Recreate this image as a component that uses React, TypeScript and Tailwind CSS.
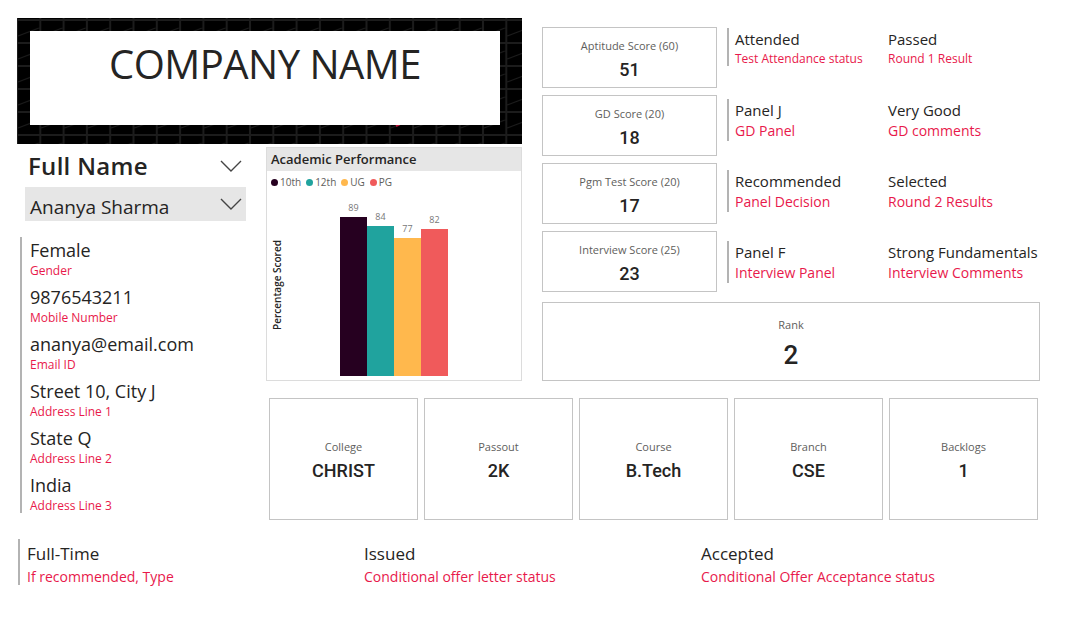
import React from "react";

const RED = "text-[#e8194b]";

type ScoreRow = {
  label: string;
  value: string;
  a: string;
  aSub: string;
  b: string;
  bSub: string;
  offset: string;
  small?: boolean;
};

const scoreRows: ScoreRow[] = [
  { label: "Aptitude Score (60)", value: "51", a: "Attended", aSub: "Test Attendance status", b: "Passed", bSub: "Round 1 Result", offset: "mt-[1px]", small: true },
  { label: "GD Score (20)", value: "18", a: "Panel J", aSub: "GD Panel", b: "Very Good", bSub: "GD comments", offset: "mt-[4px]" },
  { label: "Pgm Test Score (20)", value: "17", a: "Recommended", aSub: "Panel Decision", b: "Selected", bSub: "Round 2 Results", offset: "mt-[7px]" },
  { label: "Interview Score (25)", value: "23", a: "Panel F", aSub: "Interview Panel", b: "Strong Fundamentals", bSub: "Interview Comments", offset: "mt-[10px]" },
];

const personal = [
  { value: "Female", label: "Gender" },
  { value: "9876543211", label: "Mobile Number" },
  { value: "ananya@email.com", label: "Email ID" },
  { value: "Street 10, City J", label: "Address Line 1" },
  { value: "State Q", label: "Address Line 2" },
  { value: "India", label: "Address Line 3" },
];

const bars = [
  { name: "10th", value: 89, color: "bg-[#260020]" },
  { name: "12th", value: 84, color: "bg-[#20a39e]" },
  { name: "UG", value: 77, color: "bg-[#ffb84d]" },
  { name: "PG", value: 82, color: "bg-[#f05a5b]" },
];

const academics = [
  { label: "College", value: "CHRIST" },
  { label: "Passout", value: "2K" },
  { label: "Course", value: "B.Tech" },
  { label: "Branch", value: "CSE" },
  { label: "Backlogs", value: "1" },
];

const offer = [
  { value: "Full-Time", label: "If recommended, Type" },
  { value: "Issued", label: "Conditional offer letter status" },
  { value: "Accepted", label: "Conditional Offer Acceptance status" },
];

function Chevron() {
  return (
    <svg width="22" height="12" viewBox="0 0 22 12" fill="none">
      <polyline points="1,1 11,11 21,1" stroke="#444" strokeWidth="1.4" />
    </svg>
  );
}

function Banner() {
  return (
    <div className="relative h-full w-full overflow-hidden bg-black">
      <svg className="absolute inset-0 h-full w-full" aria-hidden>
        <defs>
          <pattern id="tiles" width="23.3" height="23" patternUnits="userSpaceOnUse" x="0" y="2">
            <rect x="0.5" y="0.5" width="22.3" height="22" fill="none" stroke="#1c1c1c" strokeWidth="1" />
            <line x1="1" y1="16" x2="22" y2="8" stroke="#1c1c1c" strokeWidth="1" />
          </pattern>
        </defs>
        <rect width="100%" height="100%" fill="url(#tiles)" />
        <line x1="379" y1="108" x2="383" y2="106" stroke="#c0143c" strokeWidth="2" />
      </svg>
      <div className="relative ml-[13px] mt-[13px] flex h-[94px] w-[470px] justify-center bg-white pt-[11px]">
        <span className="text-[40px] leading-[44px] font-normal tracking-[-0.5px] text-[#252423]">
          COMPANY NAME
        </span>
      </div>
    </div>
  );
}

function Card({ label, value, big }: { label: string; value: string; big?: boolean }) {
  return (
    <div className="flex h-full w-full flex-col items-center justify-center border border-[#c4c4c4] bg-white">
      <span className="mt-[3px] text-[11px] leading-[15px] text-[#605e5c]">{label}</span>
      <span
        className={`font-['Roboto',sans-serif] font-medium text-[#252423] ${big ? "mt-[8px] text-[26px] leading-[30px]" : "mt-[6px] text-[18px] leading-[22px]"}`}
      >
        {value}
      </span>
    </div>
  );
}

export default function App() {
  return (
    <div className="h-[626px] w-[1078px] overflow-hidden bg-white pl-[17px] pt-[18px] font-['Open_Sans','Noto_Sans',sans-serif] text-[#252423]">
      <div className="grid grid-cols-[229px_256px_498px] grid-rows-[126px_237px_139px] gap-x-[20px]">
        <div className="col-span-2">
          <Banner />
        </div>

        {/* right column: scores + rank */}
        <div className="row-span-2 flex flex-col pt-[9px]">
          <div className="flex flex-col gap-[7px]">
            {scoreRows.map((r) => (
              <div key={r.label} className="flex h-[61px]">
                <div className="h-full w-[175px] shrink-0">
                  <Card label={r.label} value={r.value} />
                </div>
                <div
                  className={`ml-[10px] flex border-l-2 border-[#b3b3b3] pl-[6px] ${r.offset} ${r.small ? "h-[38px]" : "h-[42px]"}`}
                >
                  <div className="w-[153px]">
                    <p className="pt-[1px] text-[15px] leading-[21px]">{r.a}</p>
                    <p className={`${RED} ${r.small ? "text-[12px] leading-[17px]" : "text-[14px] leading-[20px]"}`}>{r.aSub}</p>
                  </div>
                  <div>
                    <p className="pt-[1px] text-[15px] leading-[21px] whitespace-nowrap">{r.b}</p>
                    <p className={`${RED} whitespace-nowrap ${r.small ? "text-[12px] leading-[17px]" : "text-[14px] leading-[20px]"}`}>{r.bSub}</p>
                  </div>
                </div>
              </div>
            ))}
          </div>
          <div className="mt-[10px] h-[79px]">
            <Card label="Rank" value="2" big />
          </div>
        </div>

        {/* left column: name + personal details */}
        <div className="row-span-2 flex flex-col">
          <div className="flex h-[43px] items-center justify-between pl-[11px] pr-[4px]">
            <span className="text-[24px] font-semibold leading-[30px] tracking-[0.3px]">Full Name</span>
            <Chevron />
          </div>
          <div className="ml-[8px] flex h-[34px] items-center justify-between bg-[#e6e6e6] pl-[5px] pr-[4px]">
            <span className="pt-[5px] text-[19px] leading-[26px]">Ananya Sharma</span>
            <Chevron />
          </div>
          <div className="ml-[3px] mt-[16px] flex h-[276px] flex-col gap-[6px] border-l-2 border-[#b3b3b3] pl-[8px] pt-[1px]">
            {personal.map((p) => (
              <div key={p.label}>
                <p className="text-[18px] leading-[25px]">{p.value}</p>
                <p className={`${RED} text-[12px] leading-[16px]`}>{p.label}</p>
              </div>
            ))}
          </div>
        </div>

        {/* chart */}
        <div className="mt-[3px] flex flex-col border border-[#dcdcdc]">
          <div className="flex h-[23px] items-center bg-[#e6e6e6] px-[4px] pb-[2px]">
            <span className="text-[13px] font-semibold leading-[18px] text-[#252423]">Academic Performance</span>
          </div>
          <div className="flex items-center gap-[5px] px-[4px] pt-[4px] text-[10px] leading-[14px] text-[#605e5c]">
            {bars.map((b) => (
              <span key={b.name} className="flex items-center gap-[2px]">
                <span className={`h-[7px] w-[7px] rounded-full ${b.color}`} />
                {b.name}
              </span>
            ))}
          </div>
          <div className="relative flex flex-1 items-end justify-center pb-[4px]">
            <span className="absolute left-[-40px] top-[90px] w-[100px] -rotate-90 text-center text-[10px] font-semibold leading-[12px] text-[#252423]">
              Percentage Scored
            </span>
            {bars.map((b) => (
              <div key={b.name} className="flex w-[27px] flex-col items-center">
                <span className="mb-[4px] text-[9px] leading-[11px] text-[#777]">{b.value}</span>
                <div className={`w-full ${b.color}`} style={{ height: `${b.value * 1.79}px` }} />
              </div>
            ))}
          </div>
        </div>

        {/* academic cards */}
        <div className="col-span-2 mt-[17px] flex h-[122px] gap-[6px] pl-[3px]">
          {academics.map((a) => (
            <div key={a.label} className="h-full w-[149px] shrink-0">
              <Card label={a.label} value={a.value} />
            </div>
          ))}
        </div>
      </div>

      {/* offer row */}
      <div className="ml-[1px] mt-[19px] flex h-[46px] border-l-2 border-[#b3b3b3] pl-[7px]">
        {offer.map((o) => (
          <div key={o.value} className="w-[337px] pt-[4px]">
            <p className="text-[17px] leading-[22px]">{o.value}</p>
            <p className={`${RED} mt-[2px] text-[14px] leading-[20px]`}>{o.label}</p>
          </div>
        ))}
      </div>
    </div>
  );
}
